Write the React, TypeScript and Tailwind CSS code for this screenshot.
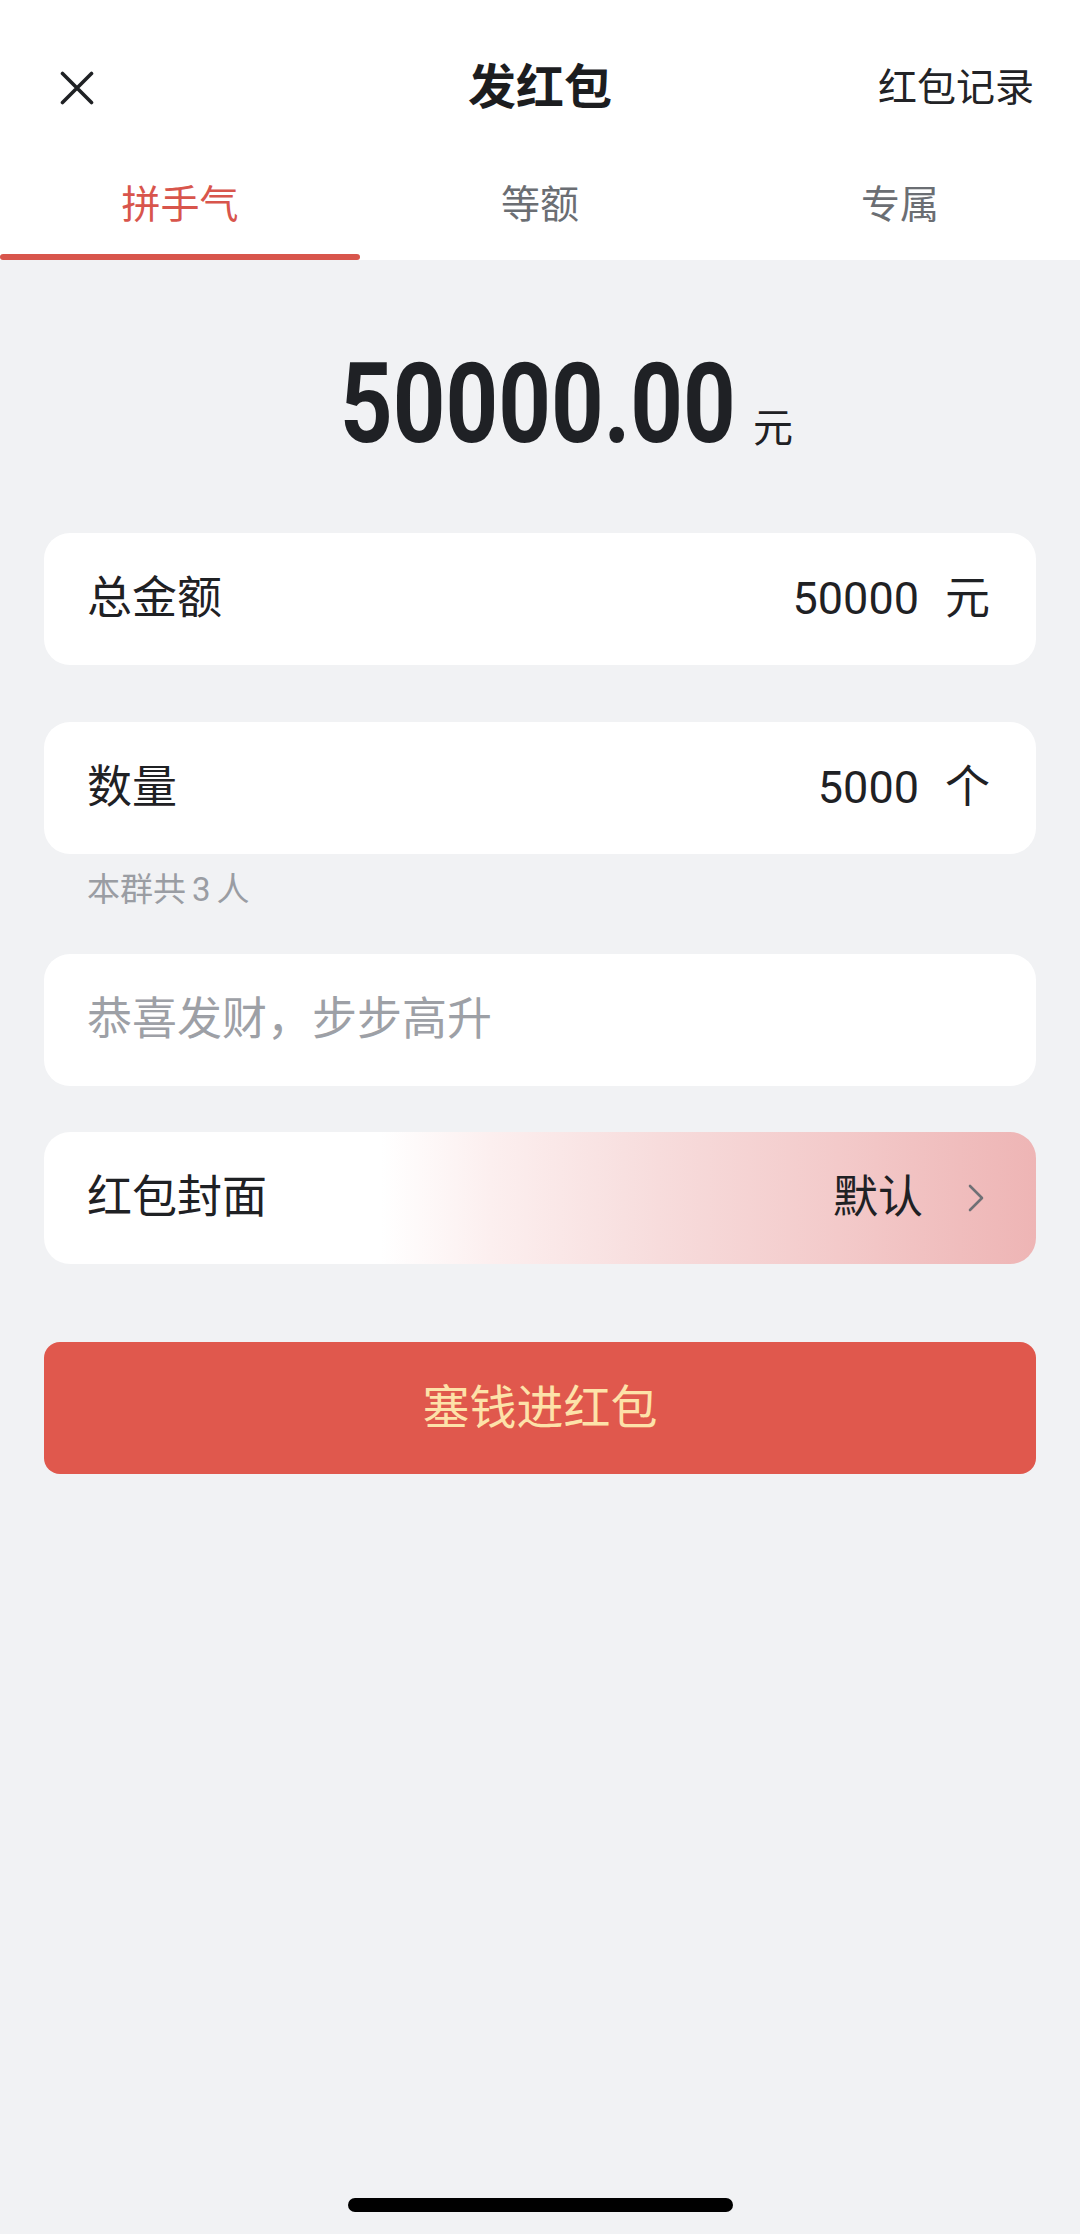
import React from "react";

const TABS = ["拼手气", "等额", "专属"];

function CloseIcon() {
  return (
    <svg
      width="34"
      height="34"
      viewBox="0 0 34 34"
      fill="none"
      stroke="#1f2124"
      strokeWidth="3.6"
      strokeLinecap="round"
      aria-hidden="true"
    >
      <path d="M2.5 2.5 31.5 31.5M31.5 2.5 2.5 31.5" />
    </svg>
  );
}

function Chevron() {
  return (
    <svg
      width="16"
      height="28"
      viewBox="0 0 16 28"
      fill="none"
      stroke="#6f7075"
      strokeWidth="2.6"
      strokeLinecap="round"
      strokeLinejoin="round"
      aria-hidden="true"
    >
      <path d="M2 2 14 14 2 26" />
    </svg>
  );
}

interface RowProps {
  readonly label: string;
  readonly value: string;
  readonly unit: string;
}

const Row = ({ label, value, unit }: RowProps) => (
  <div className="flex h-[132px] items-center justify-between rounded-[26px] bg-white pl-[43px] pr-[46px] text-[45px]">
    <span>{label}</span>
    <span className="flex items-center">
      <span>{value}</span>
      <span className="ml-[26px]">{unit}</span>
    </span>
  </div>
);

export default function App() {
  return (
    <div className="flex min-h-[2234px] flex-col bg-[#f1f2f4] font-['Roboto','Noto_Sans_CJK_SC',sans-serif] text-[#1f2124]">
      <header className="bg-white">
        <div className="grid h-[176px] grid-cols-[1fr_auto_1fr] items-center">
          <button className="justify-self-start pl-[60px]" aria-label="关闭">
            <CloseIcon />
          </button>
          <h1 className="text-[48px] font-bold text-[#1c1d1f]">发红包</h1>
          <button className="justify-self-end pr-[46px] text-[39px] text-[#222326]">
            红包记录
          </button>
        </div>
        <nav className="grid h-[84px] grid-cols-3">
          {TABS.map((tab, i) => (
            <div key={tab} className="flex flex-col items-center justify-between">
              <span
                className={
                  i === 0
                    ? "pt-[9px] text-[39px] leading-[40px] text-[#d8554c]"
                    : "pt-[9px] text-[39px] leading-[40px] text-[#6b6e73]"
                }
              >
                {tab}
              </span>
              <span
                className={
                  i === 0
                    ? "h-[6px] w-full rounded-full bg-[#d8554c]"
                    : "h-[6px] w-full"
                }
              />
            </div>
          ))}
        </nav>
      </header>

      <main className="px-[44px]">
        <div className="mt-[89px] grid grid-cols-[1fr_auto_1fr] items-baseline">
          <span />
          <div className="h-[111px] w-[400px] whitespace-nowrap">
            <span className="inline-block origin-left scale-x-[0.828] text-[111px] leading-[111px] font-bold text-[#1f2125]">
              50000.00
            </span>
          </div>
          <span className="ml-[13px] text-[40px]">元</span>
        </div>

        <div className="mt-[73px]">
          <Row label="总金额" value="50000" unit="元" />
        </div>
        <div className="mt-[57px]">
          <Row label="数量" value="5000" unit="个" />
        </div>
        <p className="pl-[43px] pt-[13px] pb-[42px] text-[33px] leading-[45px] text-[#9a9da3]">
          本群共<span className="mx-[6px]">3</span>人
        </p>

        <div className="flex h-[132px] items-center rounded-[26px] bg-white pl-[43px] pr-[46px]">
          <input
            className="w-full bg-transparent text-[45px] outline-none placeholder:text-[#9da0a6]"
            placeholder="恭喜发财，步步高升"
          />
        </div>

        <div className="mt-[46px] flex h-[132px] items-center justify-between rounded-[26px] bg-[linear-gradient(90deg,#ffffff_34%,#fcefef_45%,#f7dcdc_62%,#f3caca_80%,#eeb5b5_100%)] pl-[43px] pr-[46px] text-[45px]">
          <span>红包封面</span>
          <span className="flex items-center">
            <span>默认</span>
            <span className="ml-[45px] mr-[6px] flex">
              <Chevron />
            </span>
          </span>
        </div>

        <button className="mt-[78px] flex h-[132px] w-full items-center justify-center rounded-[16px] bg-[#e0584d] text-[47px] text-[#fde2a9]">
          塞钱进红包
        </button>
      </main>

      <div className="flex-1" />
      <div className="mx-auto mb-[22px] h-[14px] w-[385px] rounded-full bg-black" />
    </div>
  );
}
